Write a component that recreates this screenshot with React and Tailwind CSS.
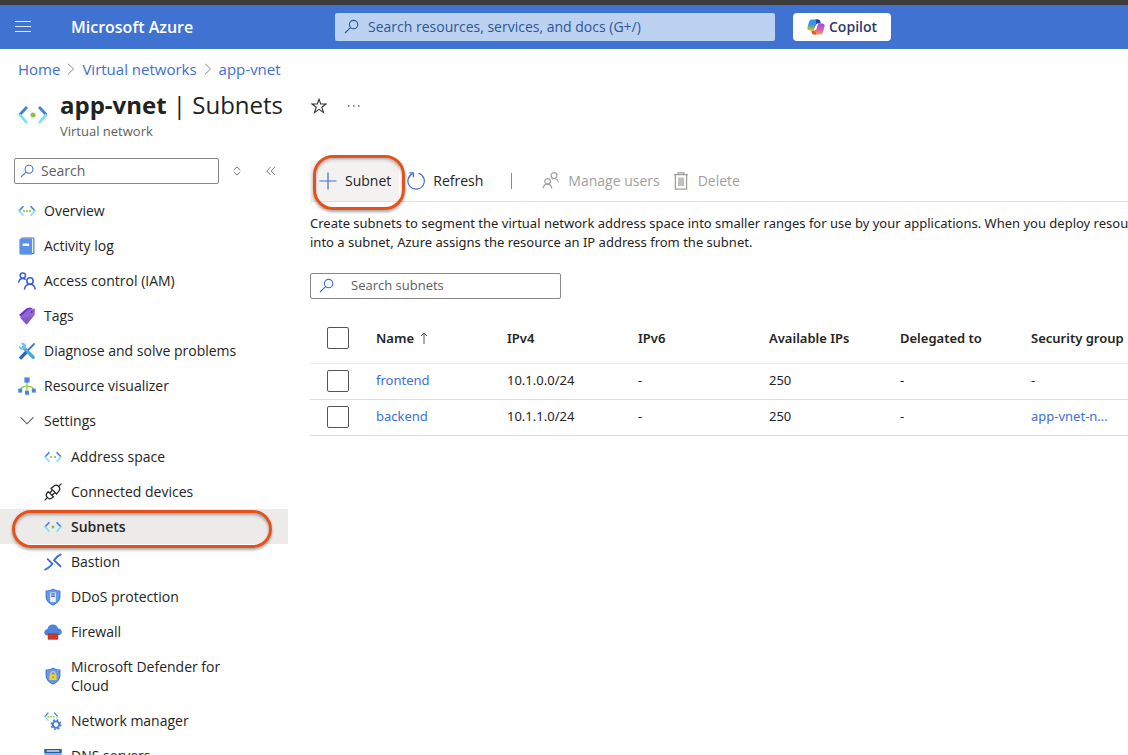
import { useState } from 'react'
import clsx from 'clsx'

function VnetIcon({ className = 'h-[18px] w-[18px]', dots = 3 }) {
  const xs = { 1: [9], 2: [7, 11], 3: [6, 9, 12] }[dots]
  return (
    <svg viewBox="0 0 18 18" fill="none" className={className} aria-hidden="true">
      <path d="M5.4 4.2 L0.9 9" stroke="#3f7fdc" strokeWidth="1.6" />
      <path d="M0.9 8.6 L5.4 13.8" stroke="#76dff8" strokeWidth="1.6" />
      <path d="M12.6 4.2 L17.1 9" stroke="#3f7fdc" strokeWidth="1.6" />
      <path d="M17.1 8.6 L12.6 13.8" stroke="#76dff8" strokeWidth="1.6" />
      {xs.map((x) => (
        <circle key={x} cx={x} cy="9" r={dots === 1 ? 1.5 : 1.1} fill="#85c340" />
      ))}
    </svg>
  )
}

function SearchIcon({ className }) {
  return (
    <svg viewBox="0 0 16 16" fill="none" stroke="currentColor" strokeWidth="1.1" className={className} aria-hidden="true">
      <circle cx="9.6" cy="5.6" r="4.2" />
      <path d="M6.5 8.6 L1 14" />
    </svg>
  )
}

function CopilotIcon() {
  return (
    <svg viewBox="0 0 18 16" className="h-4 w-[18px]" aria-hidden="true">
      <defs>
        <linearGradient id="cpLeft" x1="0" y1="0" x2="0" y2="1">
          <stop offset="0" stopColor="#2f9be8" />
          <stop offset="0.45" stopColor="#3d8fe0" />
          <stop offset="0.75" stopColor="#7cc04f" />
          <stop offset="1" stopColor="#e9c22e" />
        </linearGradient>
        <linearGradient id="cpRight" x1="0" y1="0" x2="0" y2="1">
          <stop offset="0" stopColor="#9a50e8" />
          <stop offset="0.5" stopColor="#d958ae" />
          <stop offset="1" stopColor="#f3a34c" />
        </linearGradient>
      </defs>
      <path d="M5 0.5 H12 C10.5 1 10 2.2 9.5 4 L8 9.2 C7.5 10.8 6.8 11.6 5.3 11.6 H2.6 C0.7 11.6 0 10.2 0.6 8 L2 3 C2.5 1.3 3.3 0.5 5 0.5 Z" fill="url(#cpLeft)" />
      <path d="M8.5 0.5 H11 C12.4 0.5 12.9 1.3 13.3 2.6 L13.8 4.4 H11.6 C10.2 4.4 9.4 4.9 8.8 6 L9.3 3 Z" fill="#2436bd" />
      <path d="M13 15.5 H6.6 C7.8 15 8.3 13.8 8.8 12 L10.4 6.8 C10.9 5.2 11.6 4.4 13.1 4.4 H15.4 C17.3 4.4 18 5.8 17.4 8 L16 13 C15.5 14.7 14.7 15.5 13 15.5 Z" fill="url(#cpRight)" />
      <path d="M9.5 15.5 H7 C5.6 15.5 5.1 14.7 4.7 13.4 L4.2 11.6 H6.4 C7.8 11.6 8.6 11.1 9.2 10 L8.7 13 Z" fill="#e35a2f" />
      <path d="M10.6 4.8 L8.6 8.4 L7.4 11.2" fill="none" stroke="#fff" strokeWidth="1.2" />
    </svg>
  )
}

function BookIcon() {
  return (
    <svg viewBox="0 0 18 18" className="h-[18px] w-[18px]" aria-hidden="true">
      <path d="M3.5 0.6 H14.5 C15.8 0.6 16.4 1.2 16.4 2 V15.8 C16.4 16.8 15.6 17.2 14.5 17.2 H3.5 Z" fill="#3567bb" />
      <path d="M3.8 1.4 H15.4 V16 H3.8 Z" fill="#e3ecf9" />
      <path d="M3.3 1.6 H14 V17.6 H2.8 C2 17.6 1.4 17.1 1.4 16.3 V3.2 C1.4 2.1 2.1 1.6 3.3 1.6 Z" fill="#5b91e2" />
      <rect x="4.6" y="6.6" width="6.6" height="2.4" rx="0.3" fill="#fff" />
    </svg>
  )
}

function PeopleIcon() {
  return (
    <svg viewBox="0 0 18 18" fill="none" stroke="#3a5bdc" strokeWidth="1.5" className="h-[18px] w-[18px]" aria-hidden="true">
      <circle cx="4.8" cy="3.6" r="2.7" />
      <path d="M0.7 10.6 C0.9 8 2.4 6.4 4.8 6.4 C6 6.4 6.8 6.8 7.6 7.6" />
      <circle cx="12" cy="9" r="3.2" />
      <path d="M6.4 17.6 C6.8 14 9 12.2 12 12.2 C15 12.2 16.9 14 17.3 17.6" />
    </svg>
  )
}

function ManageUsersIcon() {
  return (
    <svg viewBox="0 0 18 18" fill="none" stroke="currentColor" strokeWidth="1.2" className="h-[18px] w-[18px]" aria-hidden="true">
      <circle cx="12" cy="3.6" r="2.9" />
      <path d="M9.6 7 C10.4 6.6 11 6.5 12 6.5 C14.4 6.5 15.8 7.8 16.4 10.4" />
      <circle cx="5.6" cy="9.4" r="2.8" />
      <path d="M1 16.4 C1.4 13.6 3 12.2 5.6 12.2 C8.2 12.2 9.4 13.6 9.8 16.4" />
    </svg>
  )
}

function TagIcon() {
  return (
    <svg viewBox="0 0 18 18" className="h-[18px] w-[18px]" aria-hidden="true">
      <path d="M8.6 1.3 L12.4 0.6 L15 2 L7 12.5 L1 7.9 Z" fill="#6a2fd0" />
      <path d="M10.4 2.2 L16 1.8 C16.7 1.8 17 2.2 17 2.9 L16.6 8 L9.2 17.1 C8.8 17.5 8.3 17.5 7.9 17.1 L2.4 11 C2 10.5 2 10.2 2.4 9.7 Z" fill="#9166d2" />
      <path d="M3 11.6 L9.4 10.6 L15 9.8 L9.2 17.1 C8.8 17.5 8.3 17.5 7.9 17.1 Z" fill="#7b50bd" opacity="0.6" />
      <circle cx="13.8" cy="5" r="0.9" fill="#4c259a" />
    </svg>
  )
}

function ToolsIcon() {
  return (
    <svg viewBox="0 0 18 18" fill="none" className="h-[18px] w-[18px]" aria-hidden="true">
      <path d="M16.6 1.4 L10 8.4" stroke="#3c6fb0" strokeWidth="1.7" />
      <path d="M8.4 10 L3 15.6" stroke="#2b62b2" strokeWidth="3.4" strokeLinecap="round" />
      <path d="M5.4 5.4 L15.2 15.2" stroke="#4fa8dd" strokeWidth="3.4" strokeLinecap="round" />
      <path d="M4.4 0.8 C6.8 0.8 8.6 3 8 5.4 C7.6 7.6 4.4 8.4 2.4 7.2 C1 6.2 0.6 5 0.9 3.4 L3 5.4 C4 5.6 5.2 4.6 5 3.4 L3 1.4 Z" fill="#6cc4ee" />
    </svg>
  )
}

function TreeIcon() {
  return (
    <svg viewBox="0 0 18 18" fill="none" className="h-[18px] w-[18px]" aria-hidden="true">
      <path d="M9 5 V14 M2.2 13 C2.6 10 5 9.6 9 9.2 C13 9.6 15.4 10 15.8 13" stroke="#94cf45" strokeWidth="1.3" />
      <rect x="6.4" y="0.4" width="5.2" height="5.2" fill="#4c84e0" />
      <rect x="0.2" y="11.6" width="4" height="4" fill="#4c84e0" />
      <rect x="7" y="13.8" width="4" height="4" fill="#4c84e0" />
      <rect x="13.8" y="11.6" width="4" height="4" fill="#4c84e0" />
    </svg>
  )
}

function ChevronDown() {
  return (
    <svg viewBox="0 0 18 18" fill="none" stroke="#555" strokeWidth="1.1" className="h-[18px] w-[18px]" aria-hidden="true">
      <path d="M2.6 5.4 L9 11.8 L15.4 5.4" />
    </svg>
  )
}

function PlugIcon() {
  return (
    <svg viewBox="0 0 18 18" fill="none" stroke="#222" strokeWidth="1.2" className="h-[18px] w-[18px]" aria-hidden="true">
      <path d="M0.6 17.4 L3.6 14.4 M14.4 3.6 L17.4 0.6" />
      <path d="M4.2 8.6 L9.4 13.8 L7.6 15.2 C6.2 16.2 4.8 16 3.4 14.6 C2 13.2 1.8 11.8 2.8 10.4 Z" />
      <path d="M7 5.4 L12.6 11 L15.2 7.6 C16.2 6.2 16 4.8 14.6 3.4 C13.2 2 11.8 1.8 10.4 2.8 Z" />
      <path d="M5.8 10.2 L8.4 7 M7.9 12.2 L11 9.5" />
    </svg>
  )
}

function BastionIcon() {
  return (
    <svg viewBox="0 0 18 18" fill="none" stroke="#3f6fd0" strokeWidth="1.9" className="h-[18px] w-[18px]" aria-hidden="true">
      <path d="M3.2 5.6 L8.4 10.8 L6.6 12.8 C5 14.4 3 15.8 0.4 17" />
      <path d="M17.4 1.2 C14.4 2.4 12.4 4 10 7.2 L17 13.8" />
    </svg>
  )
}

function ShieldIcon({ children }) {
  return (
    <svg viewBox="0 0 18 18" className="h-[18px] w-[18px]" aria-hidden="true">
      <path d="M9 0.4 C11.4 1.8 13.4 2.4 16.4 2.4 V8.4 C16.4 12.6 13 15.6 9 17.6 C5 15.6 1.6 12.6 1.6 8.4 V2.4 C4.6 2.4 6.6 1.8 9 0.4 Z" fill="#3f76d4" />
      <path d="M9 1.6 C11.2 2.7 13 3.2 15.4 3.3 V8.4 C15.4 12 12.6 14.7 9 16.5 C5.4 14.7 2.6 12 2.6 8.4 V3.3 C5 3.2 6.8 2.7 9 1.6 Z" fill="#6699ea" />
      {children}
    </svg>
  )
}

function DdosIcon() {
  return (
    <ShieldIcon>
      <rect x="6.2" y="4.4" width="5.6" height="9.6" rx="0.5" fill="#eef2f8" />
      <rect x="7.2" y="5.4" width="3.6" height="1.2" fill="#2d4f8f" />
      <rect x="7.2" y="7.6" width="3.6" height="1.2" fill="#2d4f8f" />
    </ShieldIcon>
  )
}

function DefenderIcon() {
  return (
    <ShieldIcon>
      <path d="M6.9 8 V6.6 C6.9 3.8 11.1 3.8 11.1 6.6 V8" fill="none" stroke="#f1d247" strokeWidth="1.1" />
      <rect x="5.4" y="7.6" width="7.2" height="5.4" rx="0.5" fill="#f1cf35" />
      <circle cx="9" cy="10.2" r="0.8" fill="#a88413" />
    </ShieldIcon>
  )
}

function FirewallIcon() {
  return (
    <svg viewBox="0 0 18 18" className="h-[18px] w-[18px]" aria-hidden="true">
      <path d="M4 12.4 C1.6 12.4 0.2 11.2 0.2 9.4 C0.2 7.6 1.6 6.4 3.3 6.2 C3.8 3.4 6 1.6 8.8 1.6 C11.6 1.6 13.4 3.2 14.2 5.6 C16.4 5.8 17.8 7.2 17.8 9.1 C17.8 11.2 16.2 12.4 14 12.4 Z" fill="#4f83df" />
      <rect x="3.8" y="10.4" width="10.4" height="6.2" fill="#b5291f" />
      <path d="M3.8 12.5 H14.2 M3.8 14.6 H14.2 M7.3 10.4 V12.5 M10.8 10.4 V12.5 M9 12.5 V14.6 M5.8 12.5 V14.6 M12.2 12.5 V14.6 M7.3 14.6 V16.6 M10.8 14.6 V16.6" stroke="#e5644f" strokeWidth="0.5" />
    </svg>
  )
}

function NetworkManagerIcon() {
  return (
    <svg viewBox="0 0 18 18" fill="none" className="h-[18px] w-[18px]" aria-hidden="true">
      <path d="M4.4 0.6 L0.8 4.6 M10.2 0.6 L13.8 4.6" stroke="#3f7fdc" strokeWidth="1.3" />
      <path d="M0.8 4.4 L4.4 8.6 M13.8 4.4 L12.2 6.4" stroke="#76dff8" strokeWidth="1.3" />
      <path d="M3.6 4.7 H11.4" stroke="#85c340" strokeWidth="1.5" strokeDasharray="1.6 1" />
      <circle cx="12" cy="12.6" r="3.3" stroke="#4378d6" strokeWidth="1.8" />
      <circle cx="12" cy="12.6" r="4.7" stroke="#4378d6" strokeWidth="1.5" strokeDasharray="1.85 1.84" />
    </svg>
  )
}

function DnsIcon() {
  return (
    <svg viewBox="0 0 18 18" className="h-[18px] w-[18px]" aria-hidden="true">
      <rect x="0.3" y="2" width="17.4" height="4" fill="#2c56a0" />
      <rect x="2.6" y="3.2" width="12.8" height="1.6" fill="#c5d7f2" />
      <rect x="0.3" y="6" width="17.4" height="10" fill="#63bdee" />
    </svg>
  )
}

function RefreshIcon() {
  return (
    <svg viewBox="0 0 18 18" fill="none" stroke="#3b70d4" strokeWidth="1.2" className="h-[18px] w-[18px]" aria-hidden="true">
      <path d="M11.6 1.2 A8.2 8.2 0 1 1 5.6 1.6" />
      <path d="M2.4 0.8 H6.4 V5.2" />
    </svg>
  )
}

function TrashIcon() {
  return (
    <svg viewBox="0 0 18 18" fill="none" stroke="currentColor" strokeWidth="1.3" className="h-[18px] w-[18px]" aria-hidden="true">
      <path d="M2 2.6 H16 M6 2.6 V0.8 H12 V2.6 M3.4 2.6 V17.2 H14.6 V2.6 M7 5.6 V14 M9 5.6 V14 M11 5.6 V14" />
    </svg>
  )
}

const topItems = [
  { label: 'Overview', icon: <VnetIcon /> },
  { label: 'Activity log', icon: <BookIcon /> },
  { label: 'Access control (IAM)', icon: <PeopleIcon /> },
  { label: 'Tags', icon: <TagIcon /> },
  { label: 'Diagnose and solve problems', icon: <ToolsIcon /> },
  { label: 'Resource visualizer', icon: <TreeIcon /> },
]

const settingsItems = [
  { label: 'Address space', icon: <VnetIcon dots={2} /> },
  { label: 'Connected devices', icon: <PlugIcon /> },
  { label: 'Subnets', icon: <VnetIcon dots={1} />, active: true },
  { label: 'Bastion', icon: <BastionIcon /> },
  { label: 'DDoS protection', icon: <DdosIcon /> },
  { label: 'Firewall', icon: <FirewallIcon /> },
  { label: 'Microsoft Defender for Cloud', icon: <DefenderIcon /> },
  { label: 'Network manager', icon: <NetworkManagerIcon /> },
  { label: 'DNS servers', icon: <DnsIcon /> },
]

const subnets = [
  { name: 'frontend', ipv4: '10.1.0.0/24', available: 250 },
  { name: 'backend', ipv4: '10.1.1.0/24', available: 250, group: 'app-vnet-n...' },
]

const columns = ['IPv4', 'IPv6', 'Available IPs', 'Delegated to', 'Security group']

const checkboxClass = 'block h-[22px] w-[22px] appearance-none rounded-xs border border-[#555] bg-white checked:bg-[#3b70d4]'

function TopBar() {
  return (
    <header className="flex h-[49px] items-center border-t-[5px] border-[#3b3b3b] bg-[#4072d2]">
      <div className="flex w-[335px] shrink-0 items-center gap-10 pl-[15px]">
        <button type="button" aria-label="Show portal menu">
          <svg viewBox="0 0 16 12" stroke="#dfe9fa" strokeWidth="1" className="h-3 w-4">
            <path d="M0 0.5 H16 M0 5.5 H16 M0 10.5 H16" />
          </svg>
        </button>
        <a href="#" className="text-base font-semibold text-white">Microsoft Azure</a>
      </div>
      <label className="flex h-7 w-[440px] items-center gap-2 rounded-xs bg-[#bbd3f0] pl-[9px] text-[#2f5597]">
        <SearchIcon className="h-4 w-4 shrink-0" />
        <input
          type="text"
          aria-label="Search resources, services, and docs"
          placeholder="Search resources, services, and docs (G+/)"
          className="w-full bg-transparent text-sm outline-none placeholder:text-[#2f5597]"
        />
      </label>
      <button type="button" className="ml-[18px] flex h-7 items-center gap-1 rounded-sm bg-white px-[14px] text-sm font-semibold text-[#2b3a67]">
        <CopilotIcon />
        Copilot
      </button>
    </header>
  )
}

function Breadcrumb() {
  const crumbs = ['Home', 'Virtual networks', 'app-vnet']
  return (
    <nav aria-label="Breadcrumb" className="flex h-10 items-center gap-[7px] pl-[18px] text-[15px] text-[#3b70d4]">
      {crumbs.map((crumb, i) => (
        <span key={crumb} className="flex items-center gap-[7px]">
          {i > 0 && (
            <svg viewBox="0 0 8 12" fill="none" stroke="#888" className="h-3 w-2" aria-hidden="true">
              <path d="M1 0.8 L6.6 6 L1 11.2" />
            </svg>
          )}
          <a href="#">{crumb}</a>
        </span>
      ))}
    </nav>
  )
}

function PageTitle() {
  return (
    <div className="flex h-[54px] items-start pt-px">
      <div className="flex w-[60px] shrink-0 justify-center pt-[10px] pl-[6px]">
        <VnetIcon className="h-[30px] w-[30px]" dots={1} />
      </div>
      <div>
        <h1 className="text-2xl leading-[30px] whitespace-nowrap text-[#222]">
          <span className="font-bold">app-vnet</span> | Subnets
        </h1>
        <p className="text-[13px] leading-[22px] text-[#605e5c]">Virtual network</p>
      </div>
      <div className="flex h-8 items-center gap-5 pl-7">
        <button type="button" aria-label="Add to favorites">
          <svg viewBox="0 0 16 16" fill="none" stroke="#333" strokeWidth="1.1" className="h-4 w-4">
            <path d="M8 1.2 L9.7 6 H15 L10.8 9.2 L12.4 14.4 L8 11.3 L3.6 14.4 L5.2 9.2 L1 6 H6.3 Z" />
          </svg>
        </button>
        <button type="button" aria-label="More">
          <svg viewBox="0 0 14 4" fill="#333" className="h-1 w-[14px]">
            <circle cx="1.8" cy="2" r="0.8" />
            <circle cx="6.8" cy="2" r="0.8" />
            <circle cx="11.8" cy="2" r="0.8" />
          </svg>
        </button>
      </div>
    </div>
  )
}

function Sidebar() {
  const [open, setOpen] = useState(true)

  return (
    <aside className="w-72 shrink-0 pt-[15px]">
      <div className="flex items-center pl-[14px]">
        <label className="flex h-[26px] w-[205px] items-center gap-1.5 rounded-xs border border-[#8a8886] pl-[5px]">
          <SearchIcon className="h-[15px] w-[15px] shrink-0 text-[#3b70d4]" />
          <input type="text" aria-label="Search menu" placeholder="Search" className="w-full bg-transparent text-sm outline-none placeholder:text-[#605e5c]" />
        </label>
        <button type="button" aria-label="Expand all" className="ml-[14px]">
          <svg viewBox="0 0 8 10" fill="none" stroke="#666" strokeWidth="0.9" className="h-[10px] w-2">
            <path d="M0.8 4 L4 1 L7.2 4 M0.8 6 L4 9 L7.2 6" />
          </svg>
        </button>
        <button type="button" aria-label="Collapse menu" className="ml-[25px]">
          <svg viewBox="0 0 10 10" fill="none" stroke="#666" strokeWidth="0.9" className="h-[10px] w-[10px]">
            <path d="M4.6 1 L0.8 5 L4.6 9 M9 1 L5.2 5 L9 9" />
          </svg>
        </button>
      </div>

      <nav aria-label="Resource menu" className="pt-[9px] text-sm text-[#252423]">
        <ul>
          {topItems.map((item) => (
            <li key={item.label}>
              <a href="#" className="flex h-[35px] items-center gap-2 pl-[18px]">
                {item.icon}
                {item.label}
              </a>
            </li>
          ))}
        </ul>
        <button type="button" onClick={() => setOpen(!open)} aria-expanded={open} className="flex h-[35px] w-full items-center gap-2 pl-[18px]">
          <ChevronDown />
          Settings
        </button>
        {open && (
          <ul className="pt-px">
            {settingsItems.map((item) => (
              <li key={item.label} className={clsx('relative', item.active && 'bg-[#edebe9] font-semibold')}>
                <a href="#" className="flex min-h-[35px] items-center gap-[9px] py-2 pl-11 leading-[19px]">
                  <span className="shrink-0">{item.icon}</span>
                  <span className="max-w-40">{item.label}</span>
                </a>
                {item.active && <Highlight className="top-px right-4 -bottom-1 left-3" />}
              </li>
            ))}
          </ul>
        )}
      </nav>
    </aside>
  )
}

// callout ring around the control to click
function Highlight({ className }) {
  return (
    <span
      className={clsx(
        'pointer-events-none absolute rounded-[20px] border-3 border-[#e4521b] shadow-[0_2px_3px_rgba(0,0,0,0.35),inset_0_2px_3px_rgba(0,0,0,0.3)]',
        className
      )}
    />
  )
}

function Toolbar() {
  return (
    <div className="flex h-[41px] items-stretch border-b border-[#e1dfdd] text-sm whitespace-nowrap text-[#252423]">
      <button type="button" className="relative flex items-center gap-2 bg-[#f3f2f1] pr-2 pl-[9px]">
        <svg viewBox="0 0 18 18" stroke="#3b70d4" strokeWidth="1.2" className="h-[18px] w-[18px]" aria-hidden="true">
          <path d="M9 0.5 V17.5 M0.5 9 H17.5" />
        </svg>
        Subnet
        <Highlight className="-top-1.5 -right-1.5 -bottom-[9px] left-[3px]" />
      </button>
      <button type="button" className="flex items-center gap-2 px-2">
        <RefreshIcon />
        Refresh
      </button>
      <span className="mx-5 h-4 w-px self-center bg-[#8a8886]" />
      <button type="button" disabled className="flex items-center gap-2 pr-1.5 pl-[10px] text-[#a19f9d]">
        <ManageUsersIcon />
        Manage users
      </button>
      <button type="button" disabled className="flex items-center gap-2 px-1.5 text-[#a19f9d]">
        <TrashIcon />
        Delete
      </button>
    </div>
  )
}

function SubnetTable() {
  return (
    <table className="w-full table-fixed border-collapse text-left font-['Noto_Sans',sans-serif] text-[13px] text-[#252423]">
      <colgroup>
        <col className="w-[66px]" />
        <col className="w-[131px]" />
        <col className="w-[131px]" />
        <col className="w-[131px]" />
        <col className="w-[131px]" />
        <col className="w-[131px]" />
        <col />
      </colgroup>
      <thead>
        <tr className="h-[49px] border-b border-[#edebe9]">
          <th className="pl-[17px]">
            <input type="checkbox" aria-label="Select all subnets" className={checkboxClass} />
          </th>
          <th className="font-semibold" aria-sort="ascending">
            <span className="flex items-center gap-1.5">
              Name
              <svg viewBox="0 0 8 12" fill="none" stroke="#444" strokeWidth="0.9" className="h-3 w-2" aria-hidden="true">
                <path d="M4 12 V1 M1 4 L4 1 L7 4" />
              </svg>
            </span>
          </th>
          {columns.map((col) => (
            <th key={col} className="font-semibold">{col}</th>
          ))}
        </tr>
      </thead>
      <tbody>
        {subnets.map((subnet) => (
          <tr key={subnet.name} className="h-9 border-b border-[#e1dfdd]">
            <td className="pl-[17px]">
              <input type="checkbox" aria-label={`Select ${subnet.name}`} className={checkboxClass} />
            </td>
            <td><a href="#" className="text-[#3b70d4]">{subnet.name}</a></td>
            <td>{subnet.ipv4}</td>
            <td>-</td>
            <td>{subnet.available}</td>
            <td>-</td>
            <td>{subnet.group ? <a href="#" className="text-[#3b70d4]">{subnet.group}</a> : '-'}</td>
          </tr>
        ))}
      </tbody>
    </table>
  )
}

export default function App() {
  return (
    <div className="h-screen overflow-hidden bg-white font-['Open_Sans',sans-serif]">
      <TopBar />
      <Breadcrumb />
      <PageTitle />
      <div className="flex">
        <Sidebar />
        <main className="min-w-0 flex-1 pt-[18px] pl-[22px]">
          <div className="min-w-[880px]">
            <Toolbar />
            <p className="pt-3 pr-8 font-['Noto_Sans',sans-serif] text-[13px] leading-[19px] text-[#252423]">
              Create subnets to segment the virtual network address space into smaller ranges for use by your applications. When you deploy resources into a subnet, Azure assigns the resource an IP address from the subnet.
            </p>
            <label className="mt-[21px] mb-[15px] flex h-[26px] w-[251px] items-center gap-4 rounded-xs border border-[#8a8886] pl-2">
              <SearchIcon className="h-4 w-4 shrink-0 text-[#3b70d4]" />
              <input type="text" aria-label="Search subnets" placeholder="Search subnets" className="w-full bg-transparent text-[13px] outline-none placeholder:text-[#605e5c]" />
            </label>
            <SubnetTable />
          </div>
        </main>
      </div>
    </div>
  )
}
